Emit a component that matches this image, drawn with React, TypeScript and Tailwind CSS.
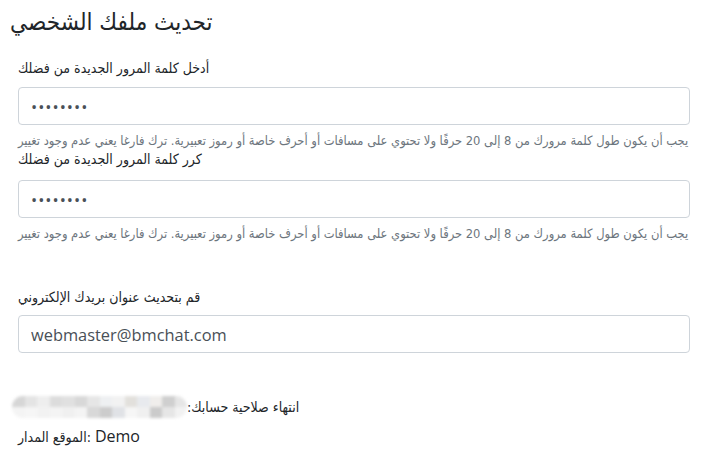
const ar = "font-['Segoe_UI','DejaVu_Sans_Condensed','DejaVu_Sans',sans-serif]";

const hint =
  "يجب أن يكون طول كلمة مرورك من 8 إلى 20 حرفًا ولا تحتوي على مسافات أو أحرف خاصة أو رموز تعبيرية. ترك فارغا يعني عدم وجود تغيير";

const blurRows = [
  ["#d6d6d6", "#e4e4e4", "#eeeeee", "#dcdcdc", "#e0e0e0", "#d8d8d8", "#e6e6e6", "#eef0f2", "#f2f2f2", "#e2e0dc", "#e8eaee", "#f0eeec", "#cfcfcf", "#e6e6e6"],
  ["#f4f4f4", "#f6f6f6", "#f2f2f2", "#f4f4f4", "#f0f0f0", "#f4f4f4", "#d8d8d8", "#cccccc", "#e0e2e6", "#f6f6f6", "#f0f0f0", "#cbcbcb", "#e6e6e6", "#f2f2f2"],
];

function Field({ label, value, type, gap }: { label: string; value: string; type: string; gap: string }) {
  const dots = type === "password" ? "tracking-[1px]" : "";
  return (
    <div>
      <label className={`block text-[14px] leading-[20px] text-[#212529] ${ar}`}>{label}</label>
      <input
        readOnly
        type={type}
        value={value}
        className={`${gap} ${dots} block h-[38px] w-[672px] rounded-[4px] border border-[#ced4da] bg-white px-[12px] font-['Open_Sans',sans-serif] text-[16.4px] text-[#495057] outline-none`}
      />
    </div>
  );
}

export default function App() {
  return (
    <div dir="ltr" className={`min-h-[457px] w-[717px] bg-white ${ar}`}>
      <h3 className="pl-[10px] pt-[7px] text-[24px] leading-[30px] font-normal text-[#212529]">تحديث ملفك الشخصي</h3>

      <div className="pl-[18px]">
        <div className="mt-[21px]">
          <Field label="أدخل كلمة المرور الجديدة من فضلك" value="password" type="password" gap="mt-[9px]" />
          <p className="mt-[8px] whitespace-nowrap text-[12.8px] leading-[16px] text-[#6c757d]">{hint}</p>
        </div>

        <div>
          <Field label="كرر كلمة المرور الجديدة من فضلك" value="password" type="password" gap="mt-[11px]" />
          <p className="mt-[7px] whitespace-nowrap text-[12.8px] leading-[18px] text-[#6c757d]">{hint}</p>
        </div>

        <div className="mt-[44px]">
          <Field label="قم بتحديث عنوان بريدك الإلكتروني" value="webmaster@bmchat.com" type="text" gap="mt-[8px]" />
        </div>
      </div>

      <div className="mt-[43px] flex items-center pl-[12px]">
        <div className="flex flex-col overflow-hidden rounded-full blur-[1.5px]">
          {blurRows.map((row, i) => (
            <div key={i} className="flex">
              {row.map((c, j) => (
                <div key={j} className="h-[11px] w-[12.5px]" style={{ backgroundColor: c }} />
              ))}
            </div>
          ))}
        </div>
        <span dir="rtl" className="text-[14px] leading-[22px] text-[#212529]">انتهاء صلاحية حسابك:</span>
      </div>

      <p className="mt-[8px] pl-[18px] text-[14px] leading-[20px] text-[#212529]">
        الموقع المدار: <span className="font-['Open_Sans',sans-serif] text-[16px]">Demo</span>
      </p>
    </div>
  );
}
